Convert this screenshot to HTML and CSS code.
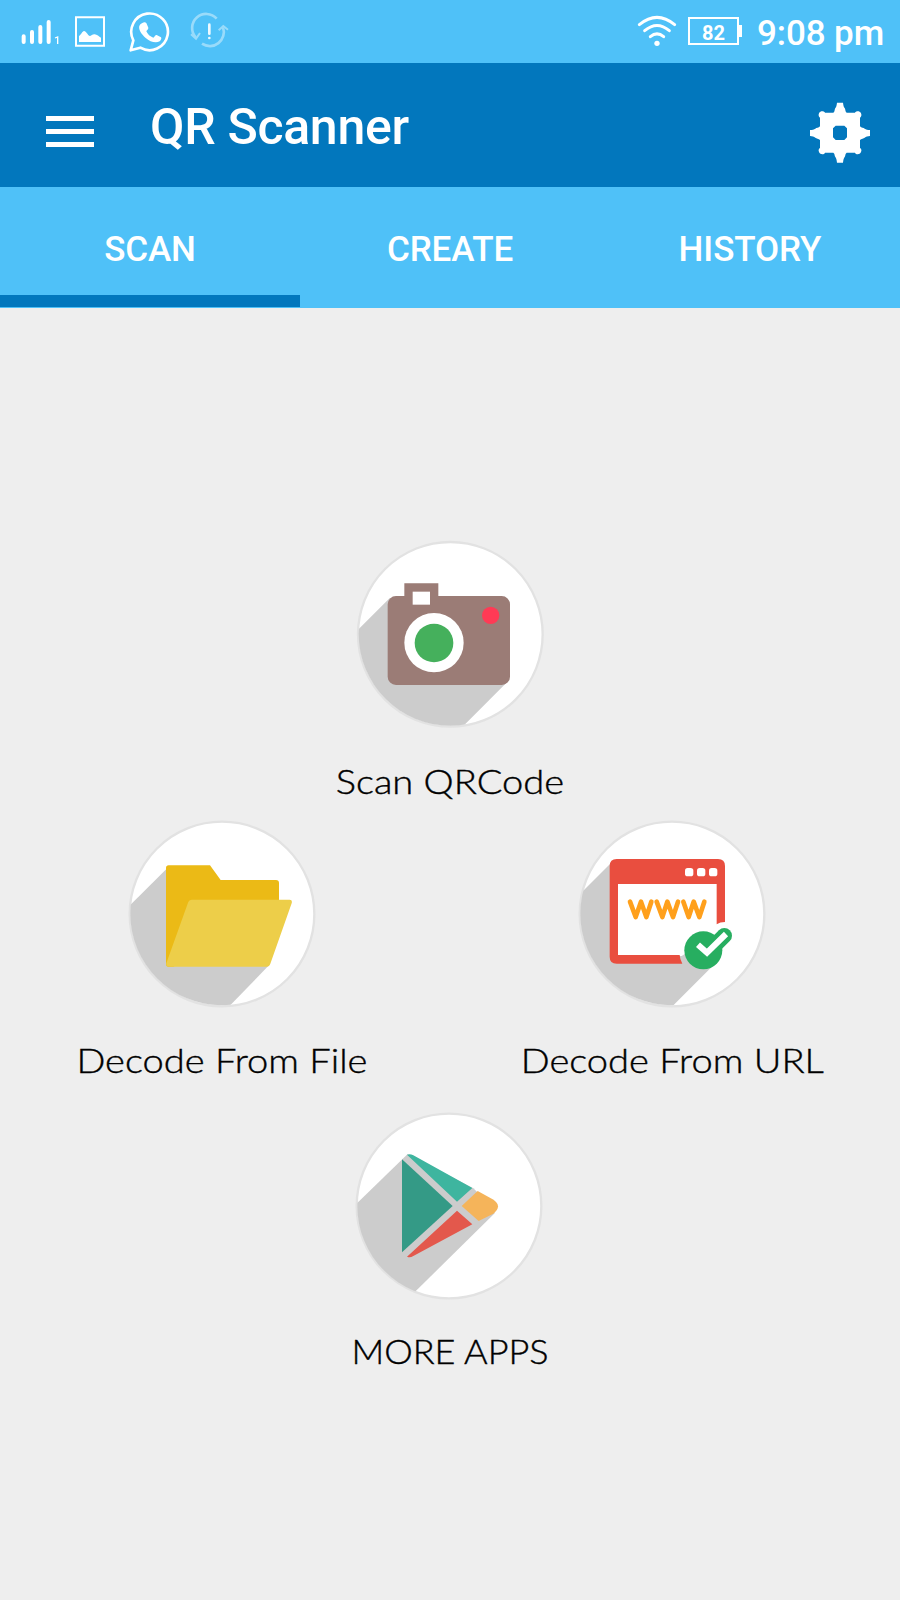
FILE: index.html
```html
<!DOCTYPE html>
<html lang="en">
<head>
<meta charset="utf-8">
<title>QR Scanner</title>
<link rel="stylesheet" href="styles.css">
</head>
<body>
<div class="status">
  <svg class="signal" width="40" height="62" viewBox="60 0 120 186" fill="none" stroke="#fff">
    <path d="M71 109v17M96 96v30M121 81v45M146 66v60" stroke-width="12" stroke-linecap="round"/>
    <path d="M165 114l8-3v21" stroke-width="4"/>
  </svg>
  <svg class="photo" width="30" height="62" viewBox="225 0 90 186">
    <path d="M228 52h84v85h-84z" fill="none" stroke="#fff" stroke-width="6"/>
    <path d="M237 126v-18c6-3 10-15 15-15 7 0 11 13 17 15 5 0 9-6 15-5 7 0 13 7 19 10v13z" fill="#fff"/>
  </svg>
  <svg class="chat" width="41" height="62" viewBox="389 0 123 186">
    <path d="M394 151l8-30a55 55 0 1 1 21 22z" fill="none" stroke="#fff" stroke-width="8" stroke-linejoin="round"/>
    <path d="M429 69c5-4 11-3 13 2l5 12c1 4-5 8-6 11 4 9 11 16 21 19 4-2 6-9 10-8l13 7c3 3-1 10-4 12-12 7-29 1-42-10-13-11-24-28-18-38 2-4 4-5 8-7z" fill="#fff"/>
  </svg>
  <svg class="sync" width="39" height="62" viewBox="570 0 117 186" fill="none" stroke="#fff">
    <g opacity=".42"><path d="M650 56A42 42 0 0 0 587 112M606 131A42 42 0 0 0 669 82" stroke-width="8"/>
    <path d="M573 103l15 13 12-17M656 91l14-13 14 11" stroke-width="6"/></g>
    <path d="M628 74v27M628 114v.1" stroke-width="8" stroke-linecap="round" opacity=".9"/>
  </svg>
  <span class="spacer"></span>
  <svg class="wifi" width="40" height="62" viewBox="50 0 120 186" fill="none" stroke="#fff" stroke-width="9" stroke-linecap="round">
    <path d="M57 74Q110 30 163 74M73 92Q110 61 147 92M90 110Q110 93 130 110"/>
    <circle cx="110" cy="130" r="8" fill="#fff" stroke="none"/>
  </svg>
  <div class="battery">82</div>
  <span class="time">9:08 pm</span>
</div>
<header class="bar">
  <svg class="menu" width="48" height="34" viewBox="0 0 48 34" fill="#fff"><path d="M0 1h48v5H0zM0 14h48v5H0zM0 27h48v5H0z"/></svg>
  <h1 class="title">QR Scanner</h1>
  <svg class="gear" width="60" height="62" viewBox="90 65 180 186"><path fill="#fff" fill-rule="evenodd" d="M171 67h18c1 8 2 13 5 16 3 4 1 11 6 14h25c2-5 14-7 18 2 3 7 0 11-3 13v26c4 5 11 4 14 7 4 3 9 3 16 4v18c-7 1-12 2-16 5-3 3-10 2-14 7v24c3 2 6 6 3 12-3 8-15 9-18 2h-25c-5 3-3 9-6 13-3 3-4 9-5 17h-18c-1-8-2-14-5-17-3-4-1-10-6-13h-25c-3 7-15 6-18-2-3-6 0-10 3-12v-24c-4-5-11-4-14-7-4-3-9-4-16-5v-18c7-1 12-1 16-4 3-3 10-2 14-7v-26c-3-2-6-6-3-13 4-9 16-7 18-2h25c5-3 3-10 6-14 3-3 4-8 5-16zM167 136l-8 8v27l8 8h26l8-8v-27l-8-8z"/></svg>
</header>
<nav class="tabs">
  <a class="tab active">SCAN</a><a class="tab">CREATE</a><a class="tab">HISTORY</a>
</nav>
<main class="actions">
  <div class="item wide">
    <svg class="icon" viewBox="0 0 720 600">
      <clipPath id="c1"><circle cx="361" cy="312" r="275"/></clipPath>
      <circle class="disc" cx="361" cy="313" r="277"/>
      <path clip-path="url(#c1)" fill="#ccc" d="M180 203L0 383V600H388L528 460z"/>
      <path fill="#9b7c76" d="M198 198h25v-38h102v38h190a25 25 0 0 1 25 25v217a25 25 0 0 1-25 25H198a25 25 0 0 1-25-25V223a25 25 0 0 1 25-25z"/>
      <path fill="#fff" d="M248 185h52v39h-52z"/>
      <circle cx="312" cy="338" r="89" fill="#fff"/><circle cx="312" cy="339" r="58" fill="#45b05c"/>
      <circle cx="482" cy="256" r="26" fill="#ff3a55"/>
    </svg>
    <p class="label l-scan">Scan QRCode</p>
  </div>
  <div class="pair">
    <div class="item">
      <svg class="icon" viewBox="96 0 720 600">
        <clipPath id="c2"><circle cx="456" cy="311" r="275"/></clipPath>
        <circle class="disc" cx="456" cy="312" r="277"/>
        <path clip-path="url(#c2)" fill="#ccc" d="M290 176L90 376V600H467L597 466z"/>
        <path fill="#ebba16" d="M296 166h124l32 44h166q9 0 9 9v80L310 470h-14q-8 0-8-8V174q0-8 8-8z"/>
        <path fill="#edce49" d="M366 269h293q9 0 6 11l-64 181q-3 9-11 9H296q-9 0-7-10l65-182q3-9 12-9z"/>
      </svg>
      <p class="label l-file">Decode From File</p>
    </div>
    <div class="item">
      <svg class="icon" viewBox="126 0 720 600">
        <clipPath id="c3"><circle cx="486" cy="311" r="275"/></clipPath>
        <circle class="disc" cx="486" cy="312" r="277"/>
        <path clip-path="url(#c3)" fill="#ccc" d="M306 156L120 342V600H476L622 454z"/>
        <path fill="#fff" d="M320 218h304v150L515 438H320z"/>
        <path fill="#e94e3f" fill-rule="evenodd" d="M320 147h304q21 0 21 21v168q-15 0-25 7V222H324v213h185q1 14 8 26H320q-21 0-21-21V168q0-21 21-21z"/>
        <g fill="#fff"><rect x="525" y="174" width="25" height="25" rx="8"/><rect x="561" y="174" width="25" height="25" rx="8"/><rect x="597" y="174" width="25" height="25" rx="8"/></g>
        <path fill="none" stroke="#ffa01c" stroke-width="14" stroke-linecap="round" stroke-linejoin="round" d="M360 275l17 46 16-46 16 46 15-46M440 275l17 46 15-46 17 46 15-46M520 275l16 46 15-46 17 46 15-46"/>
        <circle cx="580" cy="421" r="57" fill="#27ae60"/>
        <path fill="none" stroke="#27ae60" stroke-width="46" stroke-linejoin="round" stroke-linecap="round" d="M592 428l51-51"/>
        <path fill="none" stroke="#fff" stroke-width="18" d="M564 404l27 24 57-56"/>
      </svg>
      <p class="label l-url">Decode From URL</p>
    </div>
  </div>
  <div class="item wide">
    <svg class="icon" viewBox="0 0 720 600">
      <clipPath id="c4"><circle cx="357" cy="318" r="275"/></clipPath>
      <circle class="disc" cx="357" cy="318" r="277"/>
      <path clip-path="url(#c4)" fill="#ccc" d="M233 162L0 389V600H230L494 340 488 322 430 265z"/>
      <path fill="#349a86" d="M216 178L368 318 216 457z"/>
      <path fill="#3eb59f" d="M231 164q9-4 19 2l177 98-46 41z"/>
      <path fill="#e3584c" d="M381 332l46 41-177 95q-10 6-19 2z"/>
      <path fill="#f5b45a" d="M395 318l48-45 45 25q16 10 16 21 0 12-14 22l-44 22z"/>
    </svg>
    <p class="label l-more">MORE APPS</p>
  </div>
</main>
</body>
</html>
```
FILE: styles.css
```css
* { box-sizing: border-box; }
body { margin: 0; width: 900px; height: 1600px; background: #eee; font-family: Roboto, sans-serif; color: #fff; overflow: hidden; }
svg { display: block; flex: none; }

.status { display: flex; height: 62.5px; padding: 0 16px 0 20px; background: #4fc1f8; }
.photo { margin-left: 15px; }
.chat { margin-left: 24px; }
.sync { margin-left: 20px; }
.spacer { flex: 1; }
.battery { position: relative; width: 51px; height: 28px; margin: 17px 0 0 11px; border: 2px solid #fff; font-weight: 700; font-size: 20px; line-height: 28px; text-align: center; }
.battery::after { content: ""; position: absolute; right: -5px; top: 6px; width: 3px; height: 12px; background: #fff; }
.time { margin-left: 18px; width: 127px; font-weight: 500; font-size: 35px; line-height: 67px; letter-spacing: -0.1px; white-space: nowrap; }

.bar { display: flex; height: 124.5px; padding: 0 30px 0 46px; background: #0277bd; }
.menu { margin-top: 52px; }
.title { flex: 1; margin: 32px 0 0 56px; font-weight: 500; font-size: 50px; line-height: 64px; letter-spacing: -0.3px; }
.gear { margin-top: 39px; }

.tabs { display: grid; grid-template-columns: repeat(3, 1fr); height: 120.5px; background: #4fc1f8; }
.tab { height: 120px; font-weight: 500; font-size: 35px; line-height: 125px; letter-spacing: -0.1px; text-align: center; }
.active { border-bottom: 12px solid #0277bd; }

.actions { padding-top: 222.5px; }
.item { display: flex; flex-direction: column; align-items: center; height: 280px; }
.pair { display: grid; grid-template-columns: 444px 444px; column-gap: 6px; height: 290px; }
.icon { width: 240px; height: 200px; }
.disc { fill: #fff; stroke: #e2e2e2; stroke-width: 7px; }

/* Light, wide lettering for the captions */
.label { margin: 30px 0 0; font-family: Lato, sans-serif; font-weight: 300; font-size: 34px; line-height: 42px; color: #000; white-space: nowrap; -webkit-text-stroke: 0.4px #000; }
.l-scan { transform: scaleX(1.12); }
.l-file, .l-url { margin-top: 29px; transform: scaleX(1.12); }
.l-more { transform: scaleX(1.06); }
```
